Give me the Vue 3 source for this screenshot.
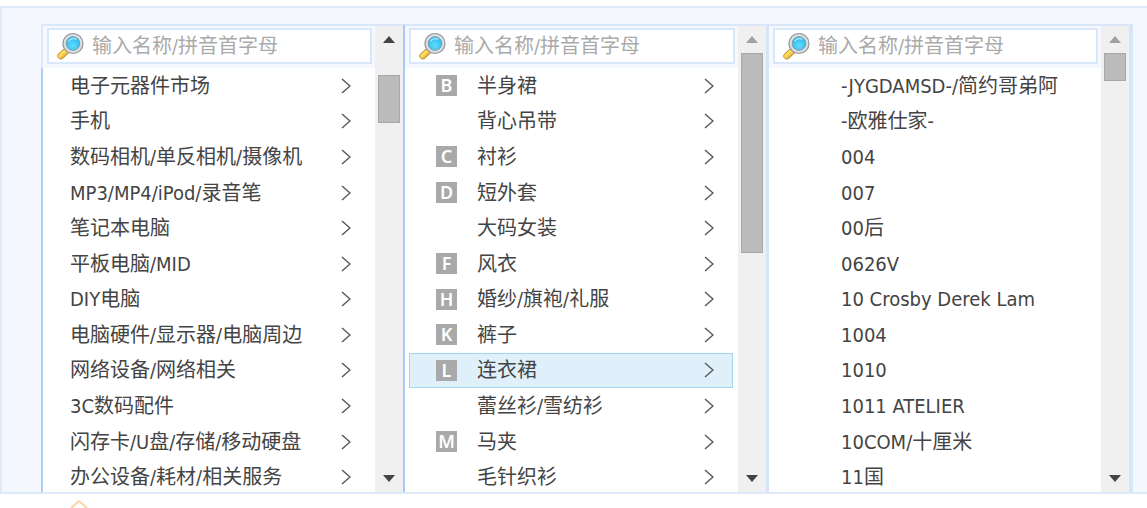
<script setup>
import { ref } from 'vue'

const columns = [
  {
    id: 'category',
    arrows: true,
    upDisabled: false,
    thumb: 'thumb-offset',
    rows: [
      '电子元器件市场', '手机', '数码相机/单反相机/摄像机', 'MP3/MP4/iPod/录音笔',
      '笔记本电脑', '平板电脑/MID', 'DIY电脑', '电脑硬件/显示器/电脑周边',
      '网络设备/网络相关', '3C数码配件', '闪存卡/U盘/存储/移动硬盘', '办公设备/耗材/相关服务',
    ].map((name) => ({ name })),
  },
  {
    id: 'type',
    arrows: true,
    upDisabled: true,
    thumb: 'thumb-long',
    rows: [
      { letter: 'B', name: '半身裙' },
      { name: '背心吊带' },
      { letter: 'C', name: '衬衫' },
      { letter: 'D', name: '短外套' },
      { name: '大码女装' },
      { letter: 'F', name: '风衣' },
      { letter: 'H', name: '婚纱/旗袍/礼服' },
      { letter: 'K', name: '裤子' },
      { letter: 'L', name: '连衣裙' },
      { name: '蕾丝衫/雪纺衫' },
      { letter: 'M', name: '马夹' },
      { name: '毛针织衫' },
    ],
  },
  {
    id: 'brand',
    arrows: false,
    upDisabled: true,
    thumb: 'thumb-short',
    rows: [
      '-JYGDAMSD-/简约哥弟阿', '-欧雅仕家-', '004', '007', '00后', '0626V',
      '10 Crosby Derek Lam', '1004', '1010', '1011 ATELIER', '10COM/十厘米', '11国',
    ].map((name) => ({ name })),
  },
]

const selected = ref('连衣裙')
const queries = ref({ category: '', type: '', brand: '' })
</script>

<template>
  <main class="page">
    <div class="picker">
      <section v-for="col in columns" :key="col.id" class="column" :class="col.id">
        <div class="content">
          <div class="head">
            <label class="search">
              <svg class="lens" viewBox="0 0 28 28" aria-hidden="true">
                <defs>
                  <radialGradient :id="'glass-' + col.id" cx="50%" cy="65%" r="60%">
                    <stop offset="0" stop-color="#5fdcff" />
                    <stop offset="1" stop-color="#2fb9ec" />
                  </radialGradient>
                  <linearGradient :id="'grip-' + col.id" x1="0" y1="0" x2="1" y2="1">
                    <stop offset="0" stop-color="#f0b22a" />
                    <stop offset="0.45" stop-color="#ffdf62" />
                    <stop offset="1" stop-color="#b26c0c" />
                  </linearGradient>
                </defs>
                <path d="M8.500 16.500l4.500 4-6.500 6c-2.500 1.500-6-1-4.500-4z" :fill="`url(#grip-${col.id})`" stroke="#bd8220" stroke-width="1" />
                <path d="M9 16l4.500 4" stroke="#777" stroke-width="2" />
                <circle cx="17" cy="11.500" r="10" fill="#d9dfe2" stroke="#94989b" stroke-width="1.200" />
                <circle cx="17" cy="11.500" r="6.800" :fill="`url(#glass-${col.id})`" stroke="#7c9cab" stroke-width="1" />
                <path d="M12.500 9.500a5.500 5.500 0 0 1 8-2" fill="none" stroke="#9be6fb" stroke-width="1.500" />
              </svg>
              <input v-model="queries[col.id]" type="text" placeholder="输入名称/拼音首字母" aria-label="输入名称/拼音首字母" />
            </label>
          </div>
          <div class="viewport">
            <ul class="list">
              <li v-for="row in col.rows" :key="row.name">
                <button
                  type="button"
                  class="row"
                  :class="{ active: row.name === selected }"
                  @click="selected = row.name"
                >
                  <span v-if="col.id !== 'category'" class="slot">
                    <span v-if="row.letter" class="badge">{{ row.letter }}</span>
                  </span>
                  <span class="name">{{ row.name }}</span>
                  <svg v-if="col.arrows" class="chevron" viewBox="0 0 10 16" aria-hidden="true">
                    <path d="M1 1l8 7-8 7" fill="none" stroke="#5a5a5a" stroke-width="1.500" />
                  </svg>
                </button>
              </li>
            </ul>
          </div>
        </div>
        <div class="scrollbar">
          <button type="button" class="step" :class="{ dim: col.upDisabled }" aria-label="向上">
            <svg viewBox="0 0 12 7" aria-hidden="true"><path d="M0 7l6-7 6 7z" /></svg>
          </button>
          <div class="track"><div class="thumb" :class="col.thumb"></div></div>
          <button type="button" class="step" aria-label="向下">
            <svg viewBox="0 0 12 7" aria-hidden="true"><path d="M0 0l6 7 6-7z" /></svg>
          </button>
        </div>
      </section>
    </div>
    <div class="pointer">
      <svg viewBox="0 0 18 9" aria-hidden="true">
        <path d="M1 9l8-7 8 7" fill="none" stroke="#fbd5a3" stroke-width="2" />
      </svg>
    </div>
  </main>
</template>

<style>
body {
  margin: 0;
  background: #fff;
}
</style>

<style scoped>
.page {
  padding-top: 6px;
  color: #444;
  font-family: "DejaVu Sans Condensed", "Noto Sans CJK SC", sans-serif;
  font-size: 20px;
}
.picker {
  display: grid;
  grid-template-columns: repeat(3, minmax(0, 1fr));
  padding: 16px 14px 0 39px;
  border: 2px solid #dfeaf9;
  border-right: 0;
  background: #f4f8fe;
}
.column {
  display: flex;
  box-sizing: border-box;
  height: 468px;
  border-top: 2px solid #dbe7f8;
  background: #fff;
}
.category {
  border-right: 2px solid #a9c8f7;
}
.type {
  border-right: 3px solid #d5e4fb;
}
.brand {
  border-right: 4px solid #d5e5fb;
}
.content {
  display: flex;
  flex: 1;
  flex-direction: column;
  min-width: 0;
}
.head {
  box-sizing: border-box;
  height: 42px;
  padding: 2px 3px 4px 4px;
  background: #f5f9ff;
}
.category .head {
  border-left: 2px solid #dfeaf9;
}
.category .viewport {
  border-left: 2px solid #b0cdf8;
}
.search {
  display: flex;
  box-sizing: border-box;
  height: 36px;
  align-items: center;
  padding-left: 7px;
  border: 2px solid #d9e7fa;
  background: #fff;
}
.lens {
  flex: none;
  width: 28px;
  height: 28px;
}
.search input {
  flex: 1;
  min-width: 0;
  height: 30px;
  margin-left: 8px;
  padding: 0;
  border: 0;
  outline: 0;
  background: transparent;
  color: #444;
  font: inherit;
}
.search input::placeholder {
  color: #aaa;
  opacity: 1;
}
.viewport {
  flex: 1;
  min-height: 0;
  overflow: hidden;
}
.list {
  display: grid;
  grid-template-rows: repeat(12, 1fr);
  height: 427px;
  margin: 0;
  padding: 0 5px 0 4px;
  list-style: none;
}
.list li {
  display: flex;
  min-height: 0;
}
.row {
  display: flex;
  flex: 1;
  align-items: center;
  min-width: 0;
  padding: 0 18px 0 22px;
  border: 1px solid transparent;
  background: transparent;
  color: inherit;
  font: inherit;
  line-height: 24px;
  text-align: left;
  white-space: nowrap;
  cursor: pointer;
}
.row.active {
  border-color: #9fd5f2;
  background: #dff0fb;
}
.type .row,
.brand .row {
  padding-left: 26px;
}
.slot {
  flex: none;
  width: 41px;
}
.badge {
  display: block;
  width: 21px;
  height: 21px;
  background: #a9a9a9;
  color: #fff;
  font-family: "Noto Sans", sans-serif;
  font-weight: 600;
  font-size: 18px;
  line-height: 21px;
  text-align: center;
}
.name {
  flex: 1;
}
.chevron {
  flex: none;
  width: 10px;
  height: 16px;
}
.scrollbar {
  display: flex;
  flex: none;
  flex-direction: column;
  width: 28px;
  background: #f0f0f0;
}
.step {
  display: flex;
  height: 27px;
  align-items: center;
  justify-content: center;
  padding: 0;
  border: 0;
  background: transparent;
  color: #444;
}
.step.dim {
  color: #a0a0a0;
}
.step svg {
  width: 12px;
  height: 7px;
  fill: currentColor;
}
.track {
  flex: 1;
}
.thumb {
  box-sizing: border-box;
  margin: 0 3px;
  border: 1px solid #a8a8a8;
  background: #bbb;
}
.thumb-offset {
  height: 48px;
  margin-top: 22px;
}
.thumb-long {
  height: 200px;
}
.thumb-short {
  height: 28px;
}
.pointer {
  display: flex;
  padding: 5px 0 0 70px;
}
.pointer svg {
  width: 18px;
  height: 9px;
}
</style>
